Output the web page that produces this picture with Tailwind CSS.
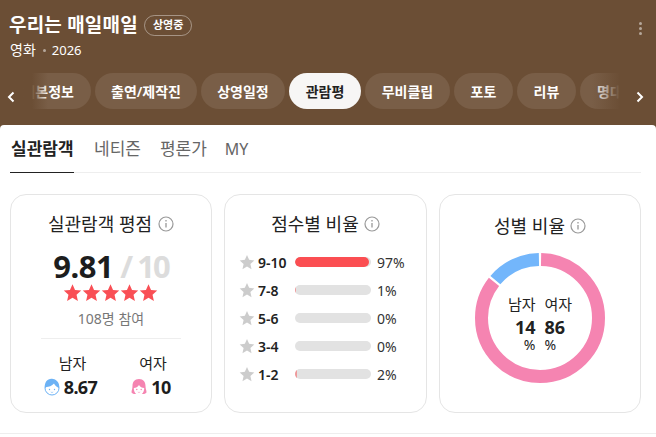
<!DOCTYPE html>
<html lang="ko">
<head>
    <meta charset="UTF-8">
    <title>우리는 매일매일 - 관람평</title>
    <script src="https://cdn.jsdelivr.net/npm/@tailwindcss/browser@4"></script>
</head>
<body class="bg-white w-[656px] h-[437px] overflow-hidden font-['Noto_Sans','Noto_Sans_CJK_KR',sans-serif]">
    <!-- Header -->
    <header class="bg-[#6b4e35] h-[133px] pt-[13px] text-white">
        <div class="flex items-start justify-between pl-[9px] pr-[14px]">
            <div>
                <div class="flex items-center gap-[6px] h-[24px]">
                    <h1 class="text-[19px] font-bold leading-[24px] tracking-[0.2px]">우리는 매일매일</h1>
                    <span class="h-[21px] px-[8px] flex items-center rounded-full border border-white/40 text-[11px] font-semibold">상영중</span>
                </div>
                <div class="flex items-center text-[14px] leading-[18px] mt-[4px] pl-px">
                    <span>영화</span>
                    <span class="w-[3px] h-[3px] rounded-full bg-white/50 mx-[7px]"></span>
                    <span class="text-[13px] -ml-px">2026</span>
                </div>
            </div>
            <div class="flex flex-col gap-[2px] pt-[9px]">
                <span class="w-[3px] h-[3px] rounded-full bg-white/50"></span>
                <span class="w-[3px] h-[3px] rounded-full bg-white/50"></span>
                <span class="w-[3px] h-[3px] rounded-full bg-white/50"></span>
            </div>
        </div>
        <!-- Nav pills -->
        <nav class="relative mt-[14px] h-[36px] flex items-center">
            <div class="w-[619px] h-[36px] overflow-hidden flex gap-[4px] text-[14px] font-semibold pl-[12px]">
                <a class="shrink-0 w-[79px] h-[36px] rounded-full bg-[#795e47] flex items-center justify-end pr-[17px]">기본정보</a>
                <a class="shrink-0 w-[102px] h-[36px] rounded-full bg-[#795e47] flex items-center justify-center">출연/제작진</a>
                <a class="shrink-0 w-[84px] h-[36px] rounded-full bg-[#795e47] flex items-center justify-center">상영일정</a>
                <a class="shrink-0 w-[72px] h-[36px] rounded-full bg-[#f7f6f5] text-[#222] flex items-center justify-center">관람평</a>
                <a class="shrink-0 w-[85px] h-[36px] rounded-full bg-[#795e47] flex items-center justify-center">무비클립</a>
                <a class="shrink-0 w-[59px] h-[36px] rounded-full bg-[#795e47] flex items-center justify-center">포토</a>
                <a class="shrink-0 w-[59px] h-[36px] rounded-full bg-[#795e47] flex items-center justify-center">리뷰</a>
                <a class="shrink-0 w-[72px] h-[36px] rounded-full bg-[#795e47] flex items-center justify-start pl-[17px]">명대사</a>
            </div>
            <div class="absolute left-[12px] top-0 w-[36px] h-[36px] bg-gradient-to-r from-[#6b4e35] from-[55%] to-transparent"></div>
            <div class="absolute left-[592px] top-0 w-[28px] h-[36px] bg-gradient-to-l from-[#6b4e35] to-transparent"></div>
            <svg class="absolute left-[7px] top-[18px]" width="8" height="12" viewBox="0 0 8 12" fill="none" stroke="#fff" stroke-width="2"><path d="M6.500 1.500 2 6l4.500 4.500"/></svg>
            <svg class="absolute left-[636px] top-[18px]" width="8" height="12" viewBox="0 0 8 12" fill="none" stroke="#fff" stroke-width="2"><path d="M1.500 1.500 6 6l-4.500 4.500"/></svg>
        </nav>
    </header>

    <!-- Panel -->
    <main class="relative -mt-[8px] bg-white rounded-t-[4px] h-[312px] px-[10px]">
        <div class="flex h-[48px] border-b border-[#eeeeee] w-[631px] text-[17px] leading-[48px] text-[#666]">
            <span class="h-[48px] border-b border-[#222] font-semibold text-[#222] w-[64px] whitespace-nowrap pl-px">실관람객</span>
            <span class="ml-[20px]">네티즌</span>
            <span class="ml-[19px]">평론가</span>
            <span class="ml-[18px] text-[16px]">MY</span>
        </div>

        <div class="flex gap-[12px] mt-[21px]">
            <!-- Rating card -->
            <section class="w-[202px] h-[219px] rounded-[16px] border border-[#e5e5e5] flex flex-col items-center pt-[15px]">
                <h2 class="flex items-center gap-[6px] text-[18px] leading-[28px] text-[#222]">
                    실관람객 평점
                    <svg width="16" height="16" viewBox="0 0 16 16" fill="none" stroke="#999" stroke-width="1.2"><circle cx="8" cy="8" r="7"/><path d="M8 7v4.500M8 4v1.500" stroke-width="1.3"/></svg>
                </h2>
                <div class="flex items-baseline mt-[10px] h-[36px] leading-[36px] font-bold text-[31px] text-[#1d1d1d] tracking-[-0.5px]">
                    9.81<span class="text-[#dcdcdc] ml-[7px] tracking-[-2px]">/ 10</span>
                </div>
                <div class="flex -mt-[1px] -ml-[2px]">
                    <svg width="19" height="19" viewBox="0 0 24 24" fill="#f94f55"><path d="M12 1.500l3.200 7.300 7.800.8-5.900 5.300 1.700 7.800L12 18.600l-6.800 4.100 1.700-7.800L1 9.600l7.800-.8z"/></svg>
                    <svg width="19" height="19" viewBox="0 0 24 24" fill="#f94f55"><path d="M12 1.500l3.200 7.300 7.800.8-5.900 5.300 1.700 7.800L12 18.600l-6.800 4.100 1.700-7.800L1 9.600l7.800-.8z"/></svg>
                    <svg width="19" height="19" viewBox="0 0 24 24" fill="#f94f55"><path d="M12 1.500l3.200 7.300 7.800.8-5.900 5.300 1.700 7.800L12 18.600l-6.800 4.100 1.700-7.800L1 9.600l7.800-.8z"/></svg>
                    <svg width="19" height="19" viewBox="0 0 24 24" fill="#f94f55"><path d="M12 1.500l3.200 7.300 7.800.8-5.900 5.300 1.700 7.800L12 18.600l-6.800 4.100 1.700-7.800L1 9.600l7.800-.8z"/></svg>
                    <svg width="19" height="19" viewBox="0 0 24 24" fill="#f94f55"><path d="M12 1.500l3.200 7.300 7.800.8-5.900 5.300 1.700 7.800L12 18.600l-6.800 4.100 1.700-7.800L1 9.600l7.800-.8z"/></svg>
                </div>
                <p class="text-[14px] leading-[18px] text-[#777] mt-[8px]">108명 참여</p>
                <div class="w-[140px] border-t border-[#eeeeee] mt-[10px]"></div>
                <div class="flex w-full pl-[32px] mt-[14px]">
                    <div class="flex flex-col items-center w-[55px] pr-0">
                        <span class="text-[15px] leading-[20px] text-[#222] pl-[4px]">남자</span>
                        <div class="flex items-center gap-[4px] h-[24px] mt-[2px] text-[18px] font-bold tracking-[-0.6px] text-[#1d1d1d]">
                            <svg width="16" height="18" viewBox="0 0 16 18"><circle cx="8" cy="10" r="7" fill="#fff" stroke="#6cb2f5"/><path d="M1 10C0 4 4 0 9 1c4 .5 7 4.500 6 9-2-1-4-2.500-5-4.500C8 8 4.500 9 2.500 9z" fill="#6cb2f5"/><circle cx="5.500" cy="11.500" r=".7" fill="#6cb2f5"/><circle cx="10.500" cy="11.500" r=".7" fill="#6cb2f5"/><path d="M6.800 14c.8.6 1.600.6 2.400 0" fill="none" stroke="#6cb2f5" stroke-width=".6"/></svg>
                            8.67
                        </div>
                    </div>
                    <div class="flex flex-col items-center w-[40px] ml-[33px]">
                        <span class="text-[15px] leading-[20px] text-[#222] pl-[4px] whitespace-nowrap">여자</span>
                        <div class="flex items-center gap-[4px] h-[24px] mt-[2px] text-[18px] font-bold tracking-[-0.6px] text-[#1d1d1d]">
                            <svg width="16" height="18" viewBox="0 0 16 18"><path d="M8 1C3.500 1 1.500 4 1.500 8c0 3-1 4-1 6.500 1 1 2 1.500 3 1.500h9c1 0 2-.5 3-1.500 0-2.500-1-3.500-1-6.500 0-4-2-7-6.500-7z" fill="#f584b1"/><path d="M2.800 10c2.200 0 4-1 5.200-3 1 2 3 3 5.200 3 0 4-2 7-5.200 7s-5.200-3-5.200-7z" fill="#fff"/><circle cx="5.800" cy="11.500" r=".7" fill="#f584b1"/><circle cx="10.200" cy="11.500" r=".7" fill="#f584b1"/><path d="M6.800 14c.8.6 1.600.6 2.400 0" fill="none" stroke="#f584b1" stroke-width=".6"/></svg>
                            10
                        </div>
                    </div>
                </div>
            </section>

            <!-- Score distribution card -->
            <section class="w-[203px] h-[219px] rounded-[16px] border border-[#e5e5e5] pt-[15px]">
                <h2 class="flex items-center justify-center gap-[5px] text-[18px] leading-[28px] text-[#222]">
                    점수별 비율
                    <svg width="16" height="16" viewBox="0 0 16 16" fill="none" stroke="#999" stroke-width="1.2"><circle cx="8" cy="8" r="7"/><path d="M8 7v4.500M8 4v1.500" stroke-width="1.3"/></svg>
                </h2>
                <ul class="mt-[14px] pl-[14px] flex flex-col gap-[8px] text-[14px]">
                    <li class="flex items-center h-[20px]">
                        <svg width="16" height="16" viewBox="0 0 24 24" fill="#cccccc"><path d="M12 1.500l3.200 7.300 7.800.8-5.900 5.300 1.700 7.800L12 18.600l-6.800 4.100 1.700-7.800L1 9.600l7.800-.8z"/></svg>
                        <span class="w-[40px] pl-[3px] font-semibold text-[#222]">9-10</span>
                        <span class="w-[76px] h-[10px] rounded-full bg-[#e2e2e2] overflow-hidden"><span class="block h-full rounded-full bg-[#fb4e52]" style="width:97%"></span></span>
                        <span class="ml-[6px] text-[#333]">97%</span>
                    </li>
                    <li class="flex items-center h-[20px]">
                        <svg width="16" height="16" viewBox="0 0 24 24" fill="#cccccc"><path d="M12 1.500l3.200 7.300 7.800.8-5.900 5.300 1.700 7.800L12 18.600l-6.800 4.100 1.700-7.800L1 9.600l7.800-.8z"/></svg>
                        <span class="w-[40px] pl-[3px] font-semibold text-[#222]">7-8</span>
                        <span class="w-[76px] h-[10px] rounded-full bg-[#e2e2e2] overflow-hidden"><span class="block h-full rounded-full bg-[#fb4e52]/50" style="width:1%"></span></span>
                        <span class="ml-[6px] text-[#333]">1%</span>
                    </li>
                    <li class="flex items-center h-[20px]">
                        <svg width="16" height="16" viewBox="0 0 24 24" fill="#cccccc"><path d="M12 1.500l3.200 7.300 7.800.8-5.900 5.300 1.700 7.800L12 18.600l-6.800 4.100 1.700-7.800L1 9.600l7.800-.8z"/></svg>
                        <span class="w-[40px] pl-[3px] font-semibold text-[#222]">5-6</span>
                        <span class="w-[76px] h-[10px] rounded-full bg-[#e2e2e2]"></span>
                        <span class="ml-[6px] text-[#333]">0%</span>
                    </li>
                    <li class="flex items-center h-[20px]">
                        <svg width="16" height="16" viewBox="0 0 24 24" fill="#cccccc"><path d="M12 1.500l3.200 7.300 7.800.8-5.900 5.300 1.700 7.800L12 18.600l-6.800 4.100 1.700-7.800L1 9.600l7.800-.8z"/></svg>
                        <span class="w-[40px] pl-[3px] font-semibold text-[#222]">3-4</span>
                        <span class="w-[76px] h-[10px] rounded-full bg-[#e2e2e2]"></span>
                        <span class="ml-[6px] text-[#333]">0%</span>
                    </li>
                    <li class="flex items-center h-[20px]">
                        <svg width="16" height="16" viewBox="0 0 24 24" fill="#cccccc"><path d="M12 1.500l3.200 7.300 7.800.8-5.900 5.300 1.700 7.800L12 18.600l-6.800 4.100 1.700-7.800L1 9.600l7.800-.8z"/></svg>
                        <span class="w-[40px] pl-[3px] font-semibold text-[#222]">1-2</span>
                        <span class="w-[76px] h-[10px] rounded-full bg-[#e2e2e2] overflow-hidden"><span class="block h-full rounded-full bg-[#fb4e52]/50" style="width:2%"></span></span>
                        <span class="ml-[6px] text-[#333]">2%</span>
                    </li>
                </ul>
            </section>

            <!-- Gender card -->
            <section class="w-[202px] h-[219px] rounded-[16px] border border-[#e5e5e5] flex flex-col items-center pt-[17px]">
                <h2 class="flex items-center gap-[5px] text-[18px] leading-[28px] text-[#222]">
                    성별 비율
                    <svg width="16" height="16" viewBox="0 0 16 16" fill="none" stroke="#999" stroke-width="1.2"><circle cx="8" cy="8" r="7"/><path d="M8 7v4.500M8 4v1.500" stroke-width="1.3"/></svg>
                </h2>
                <div class="relative w-[130px] h-[130px] mt-[13px]">
                    <svg class="absolute inset-0 -rotate-90" width="130" height="130" viewBox="0 0 130 130" fill="none" stroke-width="13">
                        <circle cx="65" cy="65" r="58.500" pathLength="100" stroke="#f584b1" stroke-dasharray="85.300 14.700" stroke-dashoffset="-0.300"/>
                        <circle cx="65" cy="65" r="58.500" pathLength="100" stroke="#73b6fb" stroke-dasharray="13.500 86.500" stroke-dashoffset="-86.200"/>
                    </svg>
                    <div class="absolute inset-0 flex justify-center gap-[9px] pt-[41px] text-[#222]">
                        <div class="flex flex-col items-end w-[28px]">
                            <span class="text-[15px] leading-[20px] whitespace-nowrap">남자</span>
                            <span class="text-[18px] font-bold leading-[22px] mt-[2px]">14</span>
                            <span class="text-[14px] leading-[14px]">%</span>
                        </div>
                        <div class="flex flex-col items-start w-[28px]">
                            <span class="text-[15px] leading-[20px] whitespace-nowrap">여자</span>
                            <span class="text-[18px] font-bold leading-[22px] mt-[2px]">86</span>
                            <span class="text-[14px] leading-[14px]">%</span>
                        </div>
                    </div>
                </div>
            </section>
        </div>
        <div class="w-[656px] -ml-[10px] border-t border-[#eeeeee] mt-[20px]"></div>
    </main>
</body>
</html>
